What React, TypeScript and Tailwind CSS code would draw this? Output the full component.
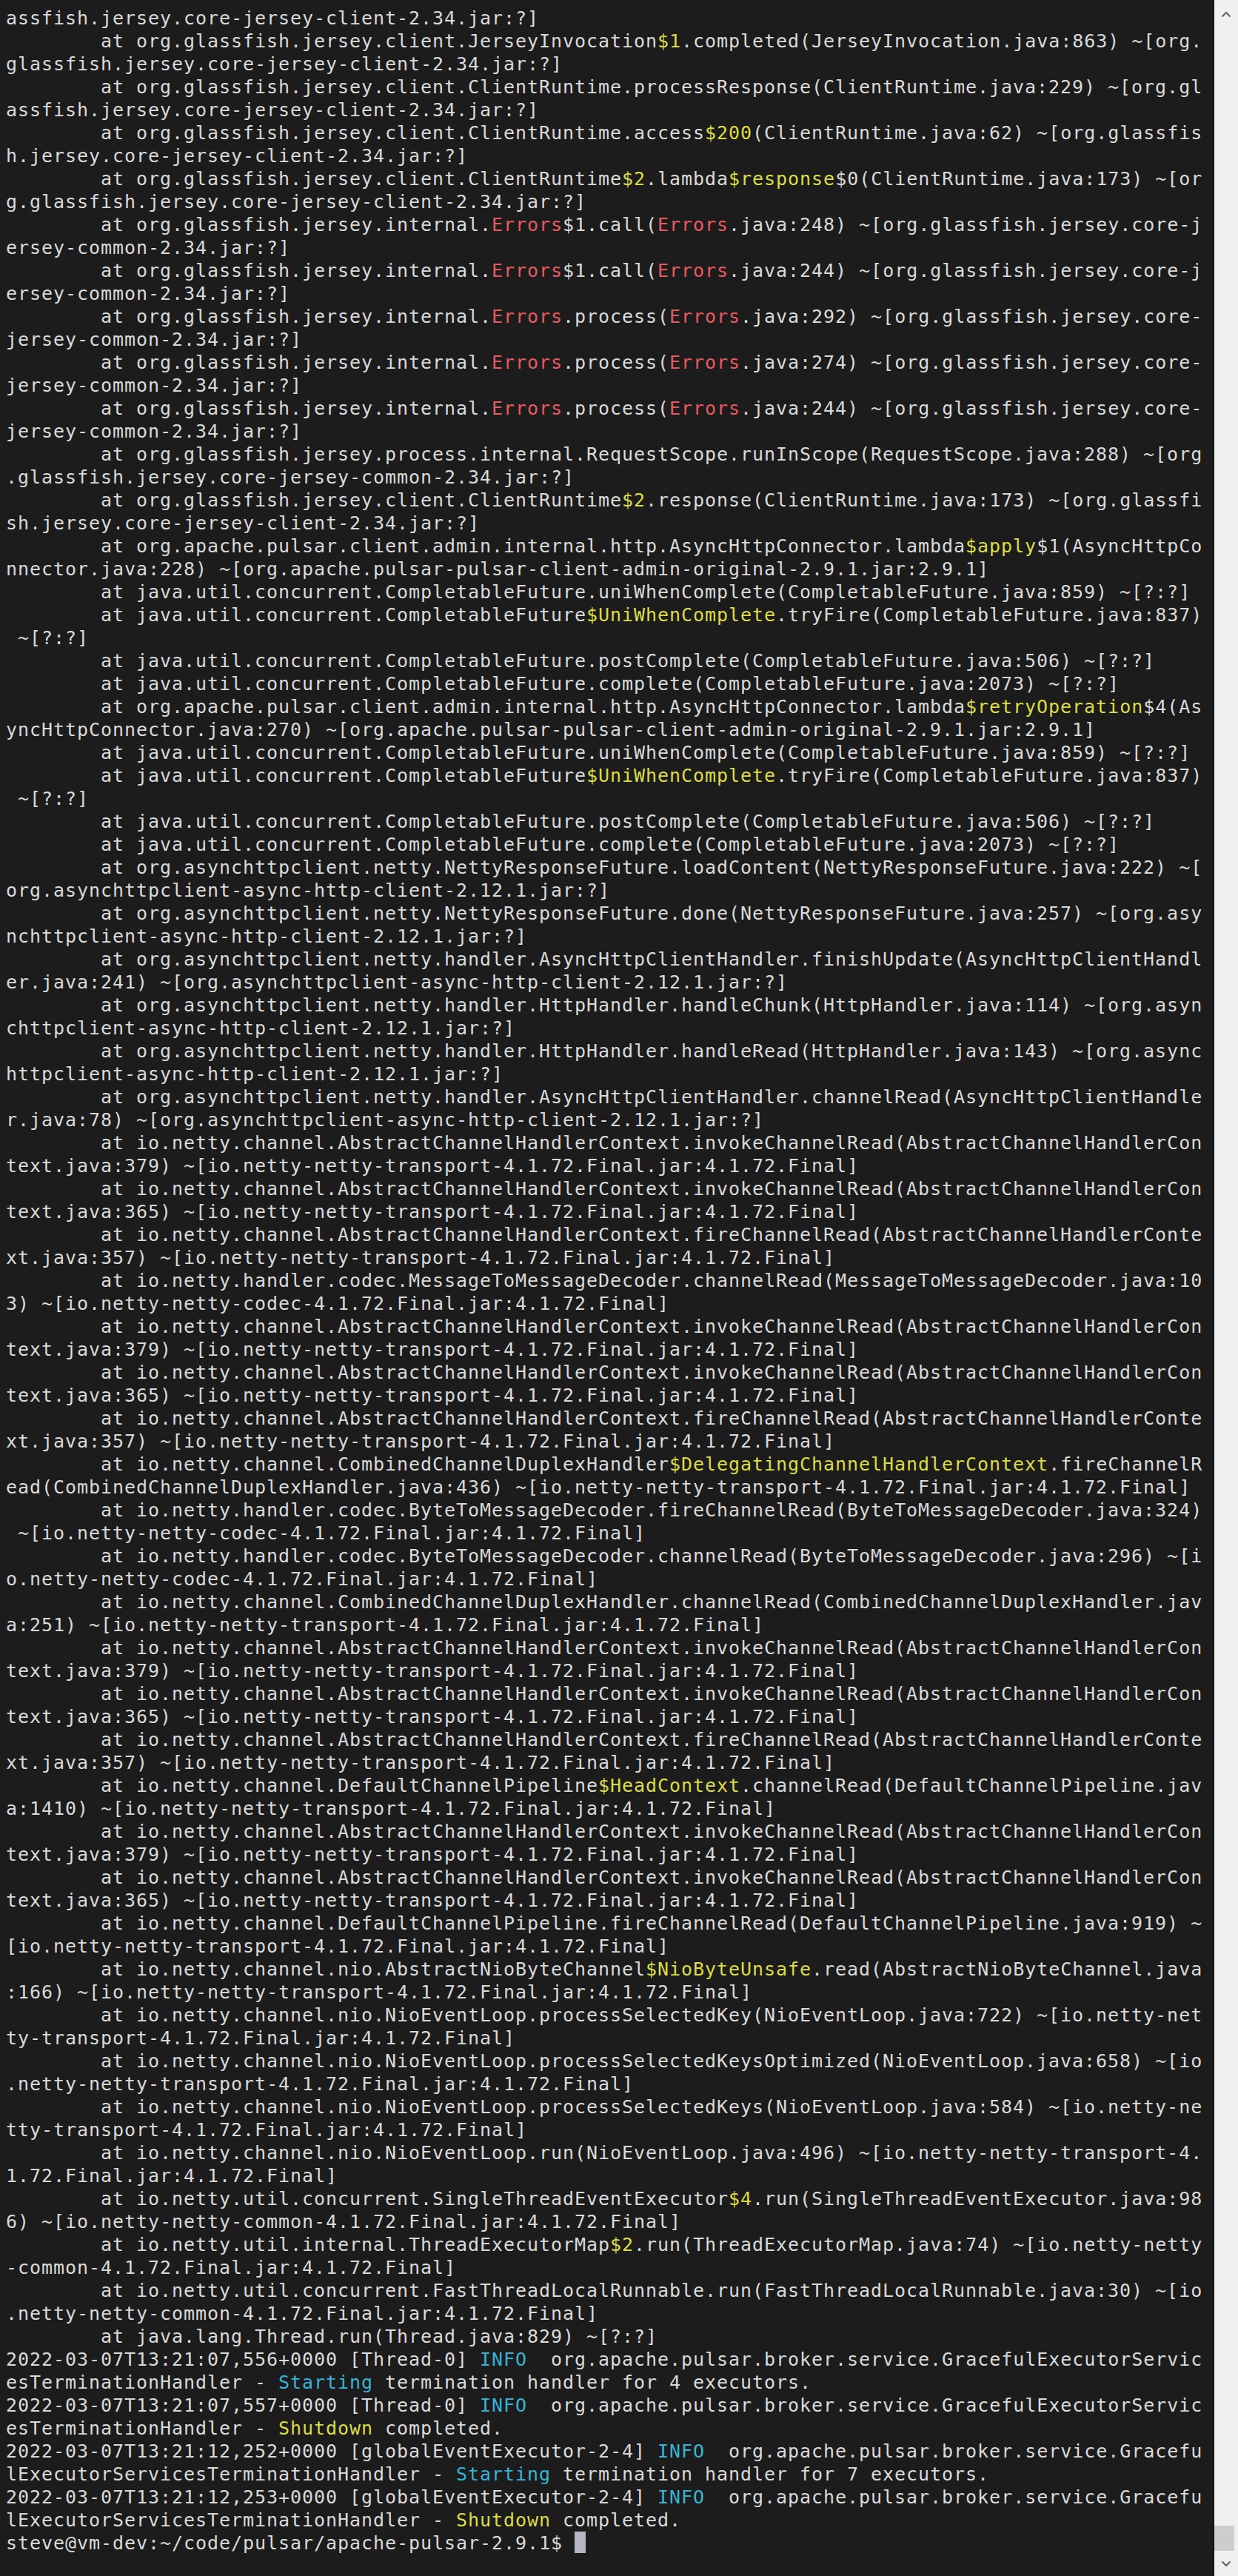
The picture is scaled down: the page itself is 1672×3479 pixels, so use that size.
import React from 'react'

const COLS = 101

// {{y:..}} yellow, {{r:..}} red, {{c:..}} cyan
const LOG: string[] = [
  'assfish.jersey.core-jersey-client-2.34.jar:?]',
  '\tat org.glassfish.jersey.client.JerseyInvocation{{y:$1}}.completed(JerseyInvocation.java:863) ~[org.glassfish.jersey.core-jersey-client-2.34.jar:?]',
  '\tat org.glassfish.jersey.client.ClientRuntime.processResponse(ClientRuntime.java:229) ~[org.glassfish.jersey.core-jersey-client-2.34.jar:?]',
  '\tat org.glassfish.jersey.client.ClientRuntime.access{{y:$200}}(ClientRuntime.java:62) ~[org.glassfish.jersey.core-jersey-client-2.34.jar:?]',
  '\tat org.glassfish.jersey.client.ClientRuntime{{y:$2}}.lambda{{y:$response}}$0(ClientRuntime.java:173) ~[org.glassfish.jersey.core-jersey-client-2.34.jar:?]',
  '\tat org.glassfish.jersey.internal.{{r:Errors}}$1.call({{r:Errors}}.java:248) ~[org.glassfish.jersey.core-jersey-common-2.34.jar:?]',
  '\tat org.glassfish.jersey.internal.{{r:Errors}}$1.call({{r:Errors}}.java:244) ~[org.glassfish.jersey.core-jersey-common-2.34.jar:?]',
  '\tat org.glassfish.jersey.internal.{{r:Errors}}.process({{r:Errors}}.java:292) ~[org.glassfish.jersey.core-jersey-common-2.34.jar:?]',
  '\tat org.glassfish.jersey.internal.{{r:Errors}}.process({{r:Errors}}.java:274) ~[org.glassfish.jersey.core-jersey-common-2.34.jar:?]',
  '\tat org.glassfish.jersey.internal.{{r:Errors}}.process({{r:Errors}}.java:244) ~[org.glassfish.jersey.core-jersey-common-2.34.jar:?]',
  '\tat org.glassfish.jersey.process.internal.RequestScope.runInScope(RequestScope.java:288) ~[org.glassfish.jersey.core-jersey-common-2.34.jar:?]',
  '\tat org.glassfish.jersey.client.ClientRuntime{{y:$2}}.response(ClientRuntime.java:173) ~[org.glassfish.jersey.core-jersey-client-2.34.jar:?]',
  '\tat org.apache.pulsar.client.admin.internal.http.AsyncHttpConnector.lambda{{y:$apply}}$1(AsyncHttpConnector.java:228) ~[org.apache.pulsar-pulsar-client-admin-original-2.9.1.jar:2.9.1]',
  '\tat java.util.concurrent.CompletableFuture.uniWhenComplete(CompletableFuture.java:859) ~[?:?]',
  '\tat java.util.concurrent.CompletableFuture{{y:$UniWhenComplete}}.tryFire(CompletableFuture.java:837) ~[?:?]',
  '\tat java.util.concurrent.CompletableFuture.postComplete(CompletableFuture.java:506) ~[?:?]',
  '\tat java.util.concurrent.CompletableFuture.complete(CompletableFuture.java:2073) ~[?:?]',
  '\tat org.apache.pulsar.client.admin.internal.http.AsyncHttpConnector.lambda{{y:$retryOperation}}$4(AsyncHttpConnector.java:270) ~[org.apache.pulsar-pulsar-client-admin-original-2.9.1.jar:2.9.1]',
  '\tat java.util.concurrent.CompletableFuture.uniWhenComplete(CompletableFuture.java:859) ~[?:?]',
  '\tat java.util.concurrent.CompletableFuture{{y:$UniWhenComplete}}.tryFire(CompletableFuture.java:837) ~[?:?]',
  '\tat java.util.concurrent.CompletableFuture.postComplete(CompletableFuture.java:506) ~[?:?]',
  '\tat java.util.concurrent.CompletableFuture.complete(CompletableFuture.java:2073) ~[?:?]',
  '\tat org.asynchttpclient.netty.NettyResponseFuture.loadContent(NettyResponseFuture.java:222) ~[org.asynchttpclient-async-http-client-2.12.1.jar:?]',
  '\tat org.asynchttpclient.netty.NettyResponseFuture.done(NettyResponseFuture.java:257) ~[org.asynchttpclient-async-http-client-2.12.1.jar:?]',
  '\tat org.asynchttpclient.netty.handler.AsyncHttpClientHandler.finishUpdate(AsyncHttpClientHandler.java:241) ~[org.asynchttpclient-async-http-client-2.12.1.jar:?]',
  '\tat org.asynchttpclient.netty.handler.HttpHandler.handleChunk(HttpHandler.java:114) ~[org.asynchttpclient-async-http-client-2.12.1.jar:?]',
  '\tat org.asynchttpclient.netty.handler.HttpHandler.handleRead(HttpHandler.java:143) ~[org.asynchttpclient-async-http-client-2.12.1.jar:?]',
  '\tat org.asynchttpclient.netty.handler.AsyncHttpClientHandler.channelRead(AsyncHttpClientHandler.java:78) ~[org.asynchttpclient-async-http-client-2.12.1.jar:?]',
  '\tat io.netty.channel.AbstractChannelHandlerContext.invokeChannelRead(AbstractChannelHandlerContext.java:379) ~[io.netty-netty-transport-4.1.72.Final.jar:4.1.72.Final]',
  '\tat io.netty.channel.AbstractChannelHandlerContext.invokeChannelRead(AbstractChannelHandlerContext.java:365) ~[io.netty-netty-transport-4.1.72.Final.jar:4.1.72.Final]',
  '\tat io.netty.channel.AbstractChannelHandlerContext.fireChannelRead(AbstractChannelHandlerContext.java:357) ~[io.netty-netty-transport-4.1.72.Final.jar:4.1.72.Final]',
  '\tat io.netty.handler.codec.MessageToMessageDecoder.channelRead(MessageToMessageDecoder.java:103) ~[io.netty-netty-codec-4.1.72.Final.jar:4.1.72.Final]',
  '\tat io.netty.channel.AbstractChannelHandlerContext.invokeChannelRead(AbstractChannelHandlerContext.java:379) ~[io.netty-netty-transport-4.1.72.Final.jar:4.1.72.Final]',
  '\tat io.netty.channel.AbstractChannelHandlerContext.invokeChannelRead(AbstractChannelHandlerContext.java:365) ~[io.netty-netty-transport-4.1.72.Final.jar:4.1.72.Final]',
  '\tat io.netty.channel.AbstractChannelHandlerContext.fireChannelRead(AbstractChannelHandlerContext.java:357) ~[io.netty-netty-transport-4.1.72.Final.jar:4.1.72.Final]',
  '\tat io.netty.channel.CombinedChannelDuplexHandler{{y:$DelegatingChannelHandlerContext}}.fireChannelRead(CombinedChannelDuplexHandler.java:436) ~[io.netty-netty-transport-4.1.72.Final.jar:4.1.72.Final]',
  '\tat io.netty.handler.codec.ByteToMessageDecoder.fireChannelRead(ByteToMessageDecoder.java:324) ~[io.netty-netty-codec-4.1.72.Final.jar:4.1.72.Final]',
  '\tat io.netty.handler.codec.ByteToMessageDecoder.channelRead(ByteToMessageDecoder.java:296) ~[io.netty-netty-codec-4.1.72.Final.jar:4.1.72.Final]',
  '\tat io.netty.channel.CombinedChannelDuplexHandler.channelRead(CombinedChannelDuplexHandler.java:251) ~[io.netty-netty-transport-4.1.72.Final.jar:4.1.72.Final]',
  '\tat io.netty.channel.AbstractChannelHandlerContext.invokeChannelRead(AbstractChannelHandlerContext.java:379) ~[io.netty-netty-transport-4.1.72.Final.jar:4.1.72.Final]',
  '\tat io.netty.channel.AbstractChannelHandlerContext.invokeChannelRead(AbstractChannelHandlerContext.java:365) ~[io.netty-netty-transport-4.1.72.Final.jar:4.1.72.Final]',
  '\tat io.netty.channel.AbstractChannelHandlerContext.fireChannelRead(AbstractChannelHandlerContext.java:357) ~[io.netty-netty-transport-4.1.72.Final.jar:4.1.72.Final]',
  '\tat io.netty.channel.DefaultChannelPipeline{{y:$HeadContext}}.channelRead(DefaultChannelPipeline.java:1410) ~[io.netty-netty-transport-4.1.72.Final.jar:4.1.72.Final]',
  '\tat io.netty.channel.AbstractChannelHandlerContext.invokeChannelRead(AbstractChannelHandlerContext.java:379) ~[io.netty-netty-transport-4.1.72.Final.jar:4.1.72.Final]',
  '\tat io.netty.channel.AbstractChannelHandlerContext.invokeChannelRead(AbstractChannelHandlerContext.java:365) ~[io.netty-netty-transport-4.1.72.Final.jar:4.1.72.Final]',
  '\tat io.netty.channel.DefaultChannelPipeline.fireChannelRead(DefaultChannelPipeline.java:919) ~[io.netty-netty-transport-4.1.72.Final.jar:4.1.72.Final]',
  '\tat io.netty.channel.nio.AbstractNioByteChannel{{y:$NioByteUnsafe}}.read(AbstractNioByteChannel.java:166) ~[io.netty-netty-transport-4.1.72.Final.jar:4.1.72.Final]',
  '\tat io.netty.channel.nio.NioEventLoop.processSelectedKey(NioEventLoop.java:722) ~[io.netty-netty-transport-4.1.72.Final.jar:4.1.72.Final]',
  '\tat io.netty.channel.nio.NioEventLoop.processSelectedKeysOptimized(NioEventLoop.java:658) ~[io.netty-netty-transport-4.1.72.Final.jar:4.1.72.Final]',
  '\tat io.netty.channel.nio.NioEventLoop.processSelectedKeys(NioEventLoop.java:584) ~[io.netty-netty-transport-4.1.72.Final.jar:4.1.72.Final]',
  '\tat io.netty.channel.nio.NioEventLoop.run(NioEventLoop.java:496) ~[io.netty-netty-transport-4.1.72.Final.jar:4.1.72.Final]',
  '\tat io.netty.util.concurrent.SingleThreadEventExecutor{{y:$4}}.run(SingleThreadEventExecutor.java:986) ~[io.netty-netty-common-4.1.72.Final.jar:4.1.72.Final]',
  '\tat io.netty.util.internal.ThreadExecutorMap{{y:$2}}.run(ThreadExecutorMap.java:74) ~[io.netty-netty-common-4.1.72.Final.jar:4.1.72.Final]',
  '\tat io.netty.util.concurrent.FastThreadLocalRunnable.run(FastThreadLocalRunnable.java:30) ~[io.netty-netty-common-4.1.72.Final.jar:4.1.72.Final]',
  '\tat java.lang.Thread.run(Thread.java:829) ~[?:?]',
  '2022-03-07T13:21:07,556+0000 [Thread-0] {{c:INFO}}  org.apache.pulsar.broker.service.GracefulExecutorServicesTerminationHandler - {{c:Starting}} termination handler for 4 executors.',
  '2022-03-07T13:21:07,557+0000 [Thread-0] {{c:INFO}}  org.apache.pulsar.broker.service.GracefulExecutorServicesTerminationHandler - {{y:Shutdown}} completed.',
  '2022-03-07T13:21:12,252+0000 [globalEventExecutor-2-4] {{c:INFO}}  org.apache.pulsar.broker.service.GracefulExecutorServicesTerminationHandler - {{c:Starting}} termination handler for 7 executors.',
  '2022-03-07T13:21:12,253+0000 [globalEventExecutor-2-4] {{c:INFO}}  org.apache.pulsar.broker.service.GracefulExecutorServicesTerminationHandler - {{y:Shutdown}} completed.',
]

const PROMPT = 'steve@vm-dev:~/code/pulsar/apache-pulsar-2.9.1$ '

const tone: Record<string, string> = {
  n: '',
  y: 'text-[#dcdc45]',
  r: 'text-[#e65a62]',
  c: 'text-[#36b4d8]',
}

type Cell = { ch: string; c: string }

// split one log line into terminal rows of COLS cells
function wrap(line: string): Cell[][] {
  const cells: Cell[] = []
  const push = (s: string, c: string) => {
    for (const ch of s.replace(/\t/g, '        ')) cells.push({ ch, c })
  }
  const re = /\{\{([yrc]):(.*?)\}\}/g
  let last = 0
  let m: RegExpExecArray | null
  while ((m = re.exec(line))) {
    push(line.slice(last, m.index), 'n')
    push(m[2], m[1])
    last = re.lastIndex
  }
  push(line.slice(last), 'n')

  const rows: Cell[][] = []
  for (let i = 0; i < cells.length; i += COLS) rows.push(cells.slice(i, i + COLS))
  return rows
}

function Row({ cells }: { cells: Cell[] }) {
  const parts: { text: string; c: string }[] = []
  for (const cell of cells) {
    const prev = parts[parts.length - 1]
    if (prev && prev.c === cell.c) prev.text += cell.ch
    else parts.push({ text: cell.ch, c: cell.c })
  }
  return (
    <div className="h-[31px] whitespace-pre">
      {parts.map((p, i) => (
        <span key={i} className={tone[p.c]}>
          {p.text}
        </span>
      ))}
    </div>
  )
}

const Chevron = ({ up }: { up?: boolean }) => (
  <svg width="14" height="9" viewBox="0 0 14 9" fill="none">
    <path
      d={up ? 'M1.5 7.5 L7 2 L12.5 7.5' : 'M1.5 1.5 L7 7 L12.5 1.5'}
      stroke="#606060"
      strokeWidth="2"
    />
  </svg>
)

export default function App() {
  const rows = LOG.flatMap(wrap)

  return (
    <div className="flex h-[3479px] w-[1672px] overflow-hidden bg-[#1c1c1c]">
      <div className="flex-1 pl-[8px] pt-[9px] font-['DejaVu_Sans_Mono',monospace] text-[25px] leading-[31px] tracking-[0.95px] text-[#dadada]">
        {rows.map((cells, i) => (
          <Row key={i} cells={cells} />
        ))}
        <div className="h-[31px] whitespace-pre">
          <span>{PROMPT}</span>
          <span className="inline-block h-[29px] w-[15px] align-top bg-[#b4b4c4]" />
        </div>
      </div>

      <div className="flex w-[34px] shrink-0 flex-col border-l-2 border-[#121212] bg-[#f0f0f0]">
        <div className="flex h-[38px] items-center justify-center">
          <Chevron up />
        </div>
        <div className="flex flex-1 flex-col justify-end">
          <div className="mr-[5px] h-[34px] bg-[#cdcdcd]" />
        </div>
        <div className="flex h-[34px] items-center justify-center">
          <Chevron />
        </div>
      </div>
    </div>
  )
}
